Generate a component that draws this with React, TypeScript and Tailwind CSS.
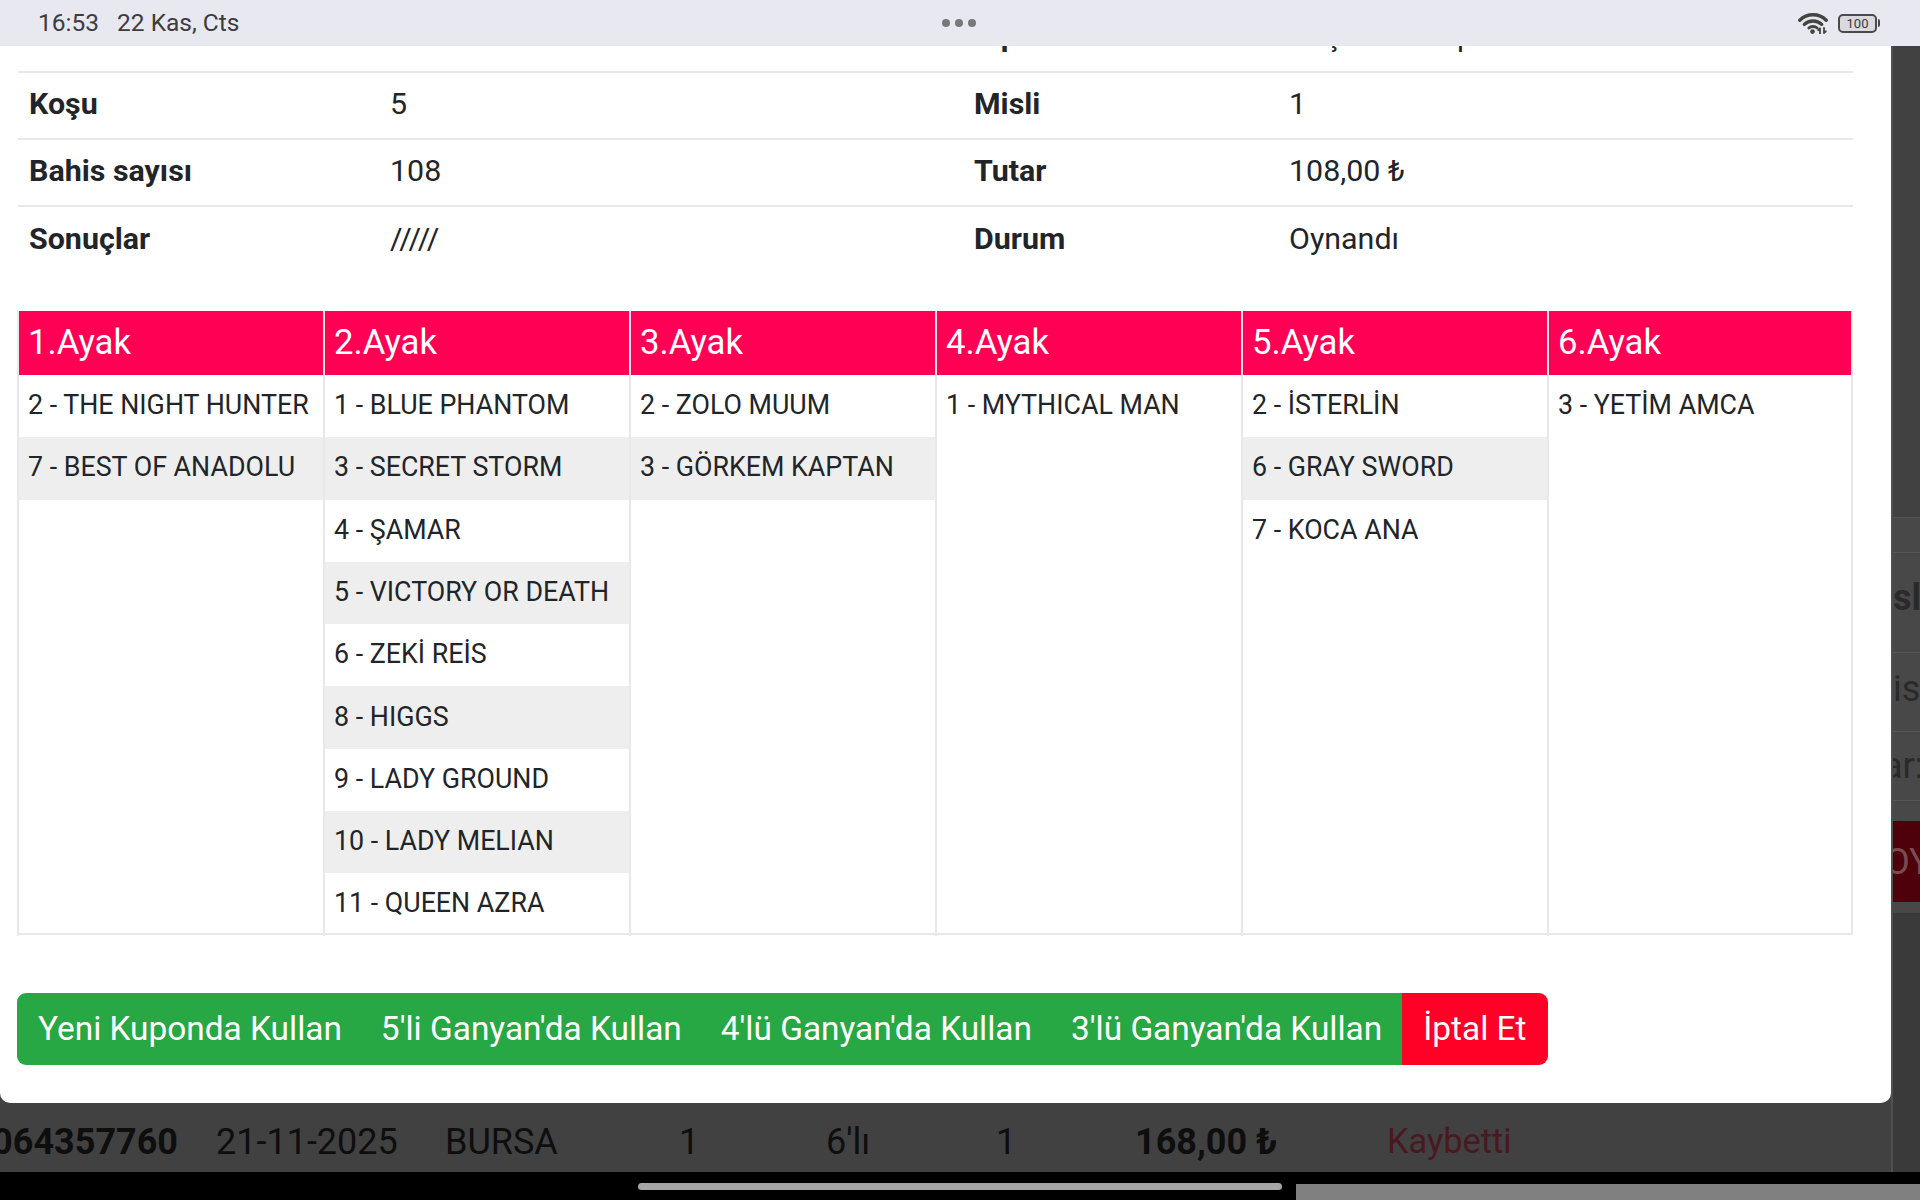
const info = [
  ["", "", "Tip", "Koşu Altılı Tip"],
];

const rows = [
  ["Koşu", "5", "Misli", "1"],
  ["Bahis sayısı", "108", "Tutar", "108,00 ₺"],
  ["Sonuçlar", "/////", "Durum", "Oynandı"],
];

const legs = [
  ["2 - THE NIGHT HUNTER", "7 - BEST OF ANADOLU"],
  ["1 - BLUE PHANTOM", "3 - SECRET STORM", "4 - ŞAMAR", "5 - VICTORY OR DEATH", "6 - ZEKİ REİS", "8 - HIGGS", "9 - LADY GROUND", "10 - LADY MELIAN", "11 - QUEEN AZRA"],
  ["2 - ZOLO MUUM", "3 - GÖRKEM KAPTAN"],
  ["1 - MYTHICAL MAN"],
  ["2 - İSTERLİN", "6 - GRAY SWORD", "7 - KOCA ANA"],
  ["3 - YETİM AMCA"],
];

const actions = ["Yeni Kuponda Kullan", "5'li Ganyan'da Kullan", "4'lü Ganyan'da Kullan", "3'lü Ganyan'da Kullan"];

function StatusIcons() {
  return (
    <div className="flex items-center gap-[10px]">
      <svg width="30" height="22" viewBox="0 0 30 22" fill="none" stroke="#444444" strokeLinecap="round">
        <path d="M1.8 8.2C9 1 21 1 28.2 8.2" strokeWidth="3.4" />
        <path d="M6.3 12.4C11 7.8 19 7.8 23.7 12.4" strokeWidth="3.4" />
        <path d="M10.8 16C13 14 17 14 19.2 16" strokeWidth="2.8" />
        <circle cx="14.5" cy="19.6" r="2.3" fill="#444444" stroke="none" />
        <path d="M22 21.5V16.5M20.2 18.2L22 16.5M26 16V21M26 21L27.8 19.3" strokeWidth="1.8" />
      </svg>
      <div className="flex items-center">
        <div className="flex h-[19px] w-[39px] items-center justify-center rounded-[5px] border-2 border-[#4a4a4a] bg-[#d9d9de] text-[13px] leading-none text-[#3a3a3a]">
          100
        </div>
        <div className="ml-[1px] h-[8px] w-[2px] rounded-r-sm bg-[#4a4a4a]" />
      </div>
    </div>
  );
}

function InfoRow({ cells, border }: { cells: string[]; border: boolean }) {
  return (
    <div className={`grid h-[67px] grid-cols-[361px_584px_315px_1fr] items-center pb-[4px] last:pb-[2px] ${border ? "border-t-2 border-[#e6e8ea]" : ""}`}>
      {cells.map((c, i) => (
        <div key={i} className={`whitespace-nowrap pl-[11px] ${i % 2 === 0 ? "font-bold" : ""}`}>
          {c}
        </div>
      ))}
    </div>
  );
}

export default function App() {
  return (
    <div className="flex h-[1200px] w-[1920px] flex-col overflow-hidden bg-black font-['Roboto',sans-serif] text-[#212529]">
      {/* status bar */}
      <div className="relative z-10 grid h-[46px] shrink-0 grid-cols-[1fr_auto_1fr] items-center bg-[#e8e8f0] pl-[38px] pr-[40px] text-[24.5px] text-[#3c3c40]">
        <div className="flex gap-[18px]">
          <span>16:53</span>
          <span>22 Kas, Cts</span>
        </div>
        <div className="flex gap-[5px]">
          <span className="h-[8px] w-[8px] rounded-full bg-[#77777c]" />
          <span className="h-[8px] w-[8px] rounded-full bg-[#77777c]" />
          <span className="h-[8px] w-[8px] rounded-full bg-[#77777c]" />
        </div>
        <div className="flex justify-end">
          <StatusIcons />
        </div>
      </div>

      <div className="flex h-[1126px] shrink-0 bg-[#414141]">
        <div className="flex w-[1891px] shrink-0 flex-col">
          {/* modal */}
          <div className="h-[1057px] shrink-0 overflow-hidden rounded-b-[10px] bg-white px-[18px] pr-[38px] text-[30.4px]">
            <div className="-mt-[42px]">
              {info.map((r, i) => (
                <InfoRow key={i} cells={r} border={false} />
              ))}
              {rows.map((r) => (
                <InfoRow key={r[0]} cells={r} border />
              ))}
            </div>

            <div className="-ml-[1px] mt-[39px] grid h-[624px] grid-cols-[repeat(5,306px)_1fr] border-b-2 border-r-2 border-[#e6e8ea]">
              {legs.map((horses, i) => (
                <div key={i} className="border-l-2 border-[#e6e8ea]">
                  <div className="flex h-[64px] items-center bg-[#ff0055] pb-[2px] pl-[9px] text-[34.7px] text-white">{i + 1}.Ayak</div>
                  {horses.map((h, j) => (
                    <div key={h} className={`flex h-[62.3px] items-center whitespace-nowrap pb-[2px] pl-[9px] text-[26.8px] ${j % 2 === 1 ? "bg-[#eeeeee]" : ""}`}>
                      {h}
                    </div>
                  ))}
                </div>
              ))}
            </div>

            <div className="-ml-[1px] mt-[58px] flex h-[72px] w-[1531px] overflow-hidden rounded-[9px] text-[33.4px] text-white">
              {actions.map((a, i) => (
                <div key={a} className={`flex items-center whitespace-nowrap bg-[#28a745] pr-[19.5px] ${i === 0 ? "pl-[21px]" : "pl-[19.5px]"}`}>
                  {a}
                </div>
              ))}
              <div className="flex flex-1 items-center justify-center bg-[#ff0026]">İptal Et</div>
            </div>
          </div>

          {/* coupon row behind the modal */}
          <div className="grid flex-1 grid-cols-[216px_229px_234px_147px_170px_139px_252px_1fr] items-center whitespace-nowrap pt-[8px] text-[36px] text-[#0e0e0e]">
            <div className="flex justify-end overflow-hidden pr-[38px] font-bold">
              <span>1064357760</span>
            </div>
            <div>21-11-2025</div>
            <div>BURSA</div>
            <div>1</div>
            <div>6'lı</div>
            <div>1</div>
            <div className="font-bold">168,00 ₺</div>
            <div className="text-[34.4px] text-[#4a1820]">Kaybetti</div>
          </div>
        </div>

        {/* coupon side panel behind the modal */}
        <div className="flex w-[29px] shrink-0 flex-col overflow-hidden whitespace-nowrap border-l-2 border-[#505050] text-[36px] text-[#2a2a2a]">
          <div className="flex h-[867px] shrink-0 flex-col">
            <div className="h-[472px] shrink-0 border-b border-[#555555]" />
            <div className="h-[35px] shrink-0 border-b border-[#555555] bg-[#484848]" />
            <div className="flex h-[100px] shrink-0 items-center border-b border-[#555555] bg-[#484848] pb-[10px] font-bold">sli</div>
            <div className="flex h-[79px] shrink-0 items-center border-b border-[#555555] bg-[#484848] pb-[6px]">is:</div>
            <div className="flex h-[69px] shrink-0 items-center border-b border-[#555555] bg-[#484848]">
              <span className="-ml-[10px]">ar:</span>
            </div>
            <div className="flex h-[20px] shrink-0 bg-[#484848]" />
            <div className="flex h-[81px] shrink-0 items-center bg-[#4e000b] text-[#7c4a50]">
              <span className="-ml-[8px]">OY</span>
            </div>
            <div className="flex-1 bg-[#484848]" />
          </div>
          <div className="flex-1 bg-[#3a3a3a]" />
        </div>
      </div>

      {/* navigation bar */}
      <div className="flex h-[28px] shrink-0 pt-[11px] pl-[638px]">
        <div className="h-[7px] w-[644px] rounded-full bg-[#a6a6a6]" />
        <div className="ml-[14px] mt-[1px] h-[16px] flex-1 bg-[#808080]" />
      </div>
    </div>
  );
}
